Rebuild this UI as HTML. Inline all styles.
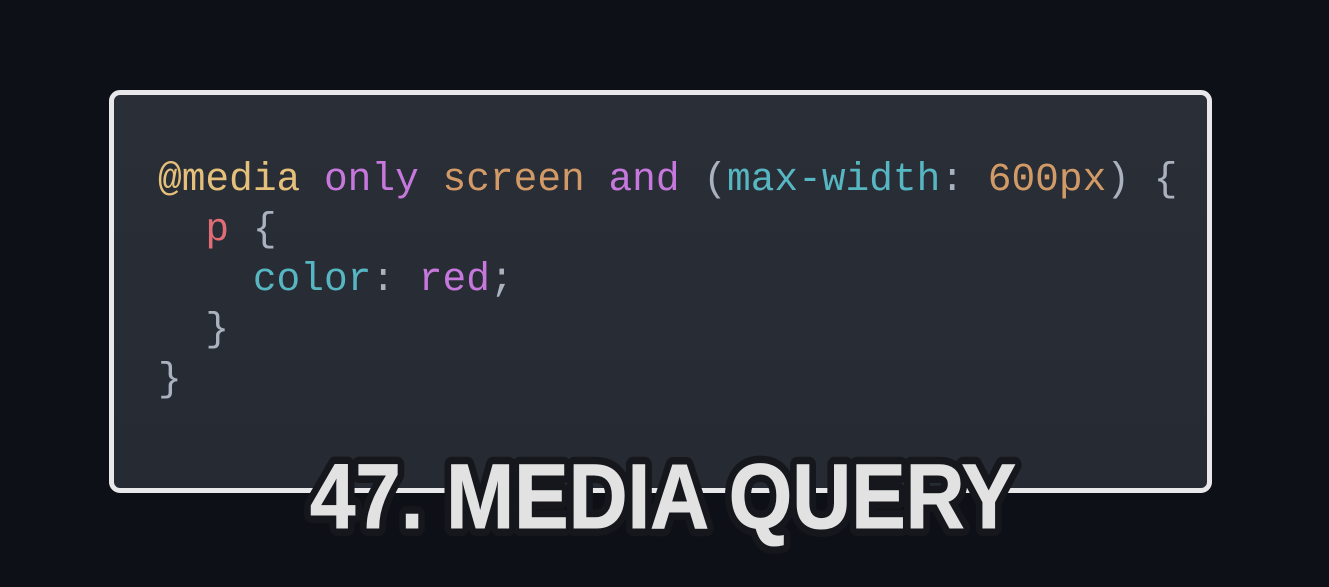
<!DOCTYPE html>
<html><head><meta charset="utf-8"><style>
html,body{margin:0;padding:0}
body{width:1329px;height:587px;overflow:hidden;background:#0e1017;position:relative;font-family:"Liberation Mono",monospace}
.box{position:absolute;left:109px;top:90px;width:1093px;height:393px;border:5px solid #e8e8ea;border-radius:11px;background:linear-gradient(180deg,#2a2e37,#262a32)}
pre{position:absolute;left:158px;top:155px;margin:0;font-family:"Liberation Mono",monospace;font-size:39.5px;line-height:50px;color:#abb2bf}
.y{color:#e5c07b}.p{color:#c678dd}.o{color:#d19a66}.c{color:#56b6c2}.r{color:#e06c75}
svg{position:absolute;left:0;top:0}
</style></head><body>
<div class="box"></div>
<pre><span class="y">@media</span> <span class="p">only</span> <span class="o">screen</span> <span class="p">and</span> (<span class="c">max-width</span>: <span class="o">600px</span>) {
  <span class="r">p</span> {
    <span class="c">color</span>: <span class="p">red</span>;
  }
}</pre>
<svg width="1329" height="587">
<g font-family="Liberation Sans, sans-serif" font-weight="bold" font-size="92">
<text x="310" y="528" textLength="706" lengthAdjust="spacingAndGlyphs" fill="#15171c" stroke="#15171c" stroke-width="16" stroke-linejoin="round">47. MEDIA QUERY</text>
<text x="310" y="528" textLength="706" lengthAdjust="spacingAndGlyphs" fill="#e2e2e2" stroke="#e2e2e2" stroke-width="1">47. MEDIA QUERY</text>
</g>
</svg>
</body></html>
